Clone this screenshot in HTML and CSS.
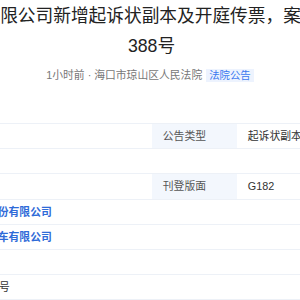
FILE: index.html
```html
<!DOCTYPE html>
<html lang="zh-CN">
<head>
    <meta charset="UTF-8">
    <meta name="viewport" content="width=device-width, initial-scale=1.0">
    <title>法院公告详情</title>
    <link rel="stylesheet" href="styles.css">
</head>
<body>
    <div class="page">
        <h1 class="title">海南省海马汽车股份有限公司新增起诉状副本及开庭传票，案号：(2024)琼0106民初388号</h1>
        <div class="meta">
            <span>1小时前 · 海口市琼山区人民法院</span>
            <span class="tag">法院公告</span>
        </div>

        <table class="detail">
            <colgroup>
                <col class="col-label">
                <col class="col-value">
                <col class="col-label">
                <col>
            </colgroup>
            <tr>
                <td class="label">案号</td>
                <td>(2024)琼0106民初388号</td>
                <td class="label">公告类型</td>
                <td>起诉状副本及开庭传票</td>
            </tr>
            <tr>
                <td class="label">公告内容</td>
                <td colspan="3">详见附件</td>
            </tr>
            <tr>
                <td class="label">刊登日期</td>
                <td>2024-05-20</td>
                <td class="label">刊登版面</td>
                <td>G182</td>
            </tr>
        </table>

        <table class="parties">
            <colgroup>
                <col class="col-role">
                <col>
            </colgroup>
            <tr>
                <td class="label">原告</td>
                <td><a href="#">海马汽车股份有限公司</a></td>
            </tr>
            <tr>
                <td class="label">被告</td>
                <td><a href="#">一汽海马汽车有限公司</a></td>
            </tr>
            <tr>
                <td class="label">第三人</td>
                <td>王某某</td>
            </tr>
            <tr>
                <td class="label">地址</td>
                <td>龙昆南路88号</td>
            </tr>
        </table>
    </div>
</body>
</html>
```

FILE: styles.css
```css
:root {
    --text-color: #222;
    --muted-color: #777;
    --label-color: #555;
    --link-color: #2f6bd8;
    --tag-color: #3a78f0;
    --tag-bg: #edf3fe;
    --label-bg: #f3f7fd;
    --line-color: #edf1f7;
}

body {
    margin: 0;
    font-family: "Liberation Sans", "Noto Sans CJK SC", sans-serif;
    color: var(--text-color);
    background-color: #ffffff;
    display: flex;
    justify-content: center;
    overflow: hidden;
}

.page {
    width: 904px;
    flex-shrink: 0;
}

.title {
    margin: 0;
    padding: 2px 110.5px 0 113.5px;
    font-size: 17.7px;
    line-height: 29.7px;
    font-weight: normal;
    text-align: center;
}

.meta {
    margin-top: 5.5px;
    font-size: 10.8px;
    line-height: 16.2px;
    color: var(--muted-color);
    text-align: center;
}

.tag {
    display: inline-block;
    margin-left: 1px;
    padding: 0 3px;
    font-size: 10.4px;
    line-height: 13px;
    color: var(--tag-color);
    background-color: var(--tag-bg);
}

table {
    width: 100%;
    border-collapse: collapse;
    table-layout: fixed;
    font-size: 10.8px;
}

.detail {
    margin-top: 39.9px;
    border-top: 1px solid var(--line-color);
}

.col-label {
    width: 85px;
}

.col-value {
    width: 369px;
}

.col-role {
    width: 235px;
}

td {
    padding: 0 10.8px;
    line-height: 24.2px;
    border-bottom: 1px solid var(--line-color);
    white-space: nowrap;
    overflow: hidden;
    color: #333;
}

td.label {
    background-color: var(--label-bg);
    color: var(--label-color);
}

.parties td.label {
    background-color: transparent;
}

a {
    color: var(--link-color);
    font-weight: 600;
    text-decoration: none;
}
```
